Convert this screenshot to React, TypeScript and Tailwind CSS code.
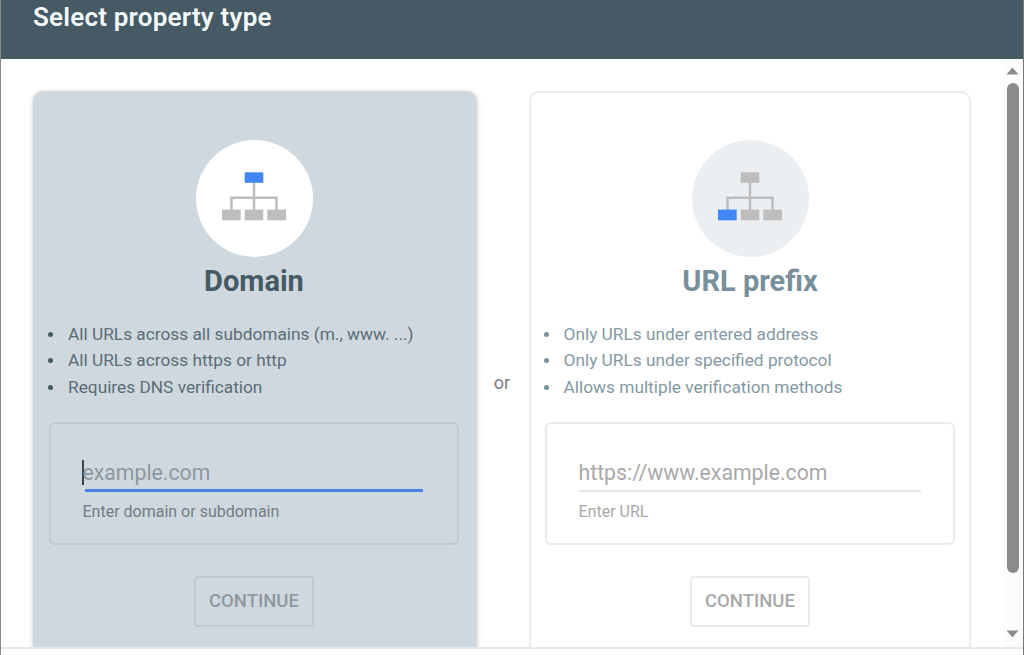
type CardProps = {
  title: string;
  points: string[];
  placeholder: string;
  hint: string;
  active?: boolean;
};

function SiteTree({ highlight }: { highlight: "root" | "leaf" }) {
  const blue = "#4285f4";
  const grey = "#bdbdbd";
  return (
    <svg width="64" height="49" viewBox="0 0 64 49" aria-hidden="true">
      <path d="M32 10v28M9.5 38V25.7h45V38" fill="none" stroke={grey} strokeWidth="2.5" />
      <rect x="22.7" y="0.3" width="18.6" height="10.5" fill={highlight === "root" ? blue : grey} />
      <rect x="0" y="37.6" width="18.7" height="10.7" fill={highlight === "leaf" ? blue : grey} />
      <rect x="22.7" y="37.6" width="18.6" height="10.7" fill={grey} />
      <rect x="45.3" y="37.6" width="18.7" height="10.7" fill={grey} />
    </svg>
  );
}

function PropertyCard({ title, points, placeholder, hint, active = false }: CardProps) {
  return (
    <section
      className={`flex h-[600px] shrink-0 flex-col items-center rounded-[10px] ${
        active
          ? "w-[444px] bg-[#cfd8de] pt-[49px] pr-[2px] text-[#455a64] shadow-[0_1px_5px_rgba(0,0,0,0.2)]"
          : "w-[442px] border-2 border-[#ececec] bg-white pt-[47px] text-[#78909c]"
      }`}
    >
      <div className={`flex size-[117px] items-center justify-center rounded-full pb-[5px] ${active ? "bg-white" : "bg-[#eceff1]"}`}>
        <SiteTree highlight={active ? "root" : "leaf"} />
      </div>
      <h2 className="mt-1 h-10 text-[29px] leading-10 font-bold">{title}</h2>
      <ul className={`mt-[20px] w-full text-[17.3px] leading-[26.4px] ${active ? "pl-[13px] text-[#5b6d76]" : "pl-[10.5px] text-[#8499a4]"}`}>
        {points.map((point) => (
          <li key={point} className="flex items-center">
            <span className={`mr-[15px] ml-[2px] size-[5px] rounded-full ${active ? "bg-[#455a64]" : "bg-[#78909c]"}`} />
            <span className="whitespace-nowrap">{point}</span>
          </li>
        ))}
      </ul>
      <div className={`mt-[21.8px] h-[123px] w-[410px] rounded-md border-2 pt-[32px] pr-8 pl-[31.5px] ${active ? "border-[#c0c9cf]" : "border-[#ebebeb]"}`}>
        <div className={`flex h-[34px] items-center pb-px text-[21.25px] ${active ? "text-[#8e979d]" : "text-[#a9a9a9]"}`}>
          {active && <span className="-mr-px -ml-px h-[25px] w-[2px] bg-[#37444b]" />}
          <span>{placeholder}</span>
        </div>
        <div className={active ? "-mt-px mr-[2px] ml-[2px] h-[3px] bg-[#4a80e2]" : "mb-px h-[2px] bg-[#e6e6e6]"} />
        <p className={`mt-[8px] text-[16px] leading-6 ${active ? "text-[#737c82]" : "text-[#a9a9a9]"}`}>{hint}</p>
      </div>
      <button className={`mt-[31px] h-[51px] w-[120px] rounded border-2 text-[18.5px] font-medium ${active ? "border-[#c0c9cf] text-[#8f989e]" : "border-[#ebebeb] text-[#a9a9a9]"}`}>
        CONTINUE
      </button>
    </section>
  );
}

function Scrollbar() {
  return (
    <div className="flex h-full w-[20px] flex-col items-center bg-[#fcfcfc] pt-[8px] pr-px pb-[9px]">
      <svg width="13" height="8" viewBox="0 0 13 8"><path d="M6.5 0.5 12.5 7.5H.5z" fill="#8b8b8b" /></svg>
      <div className="mt-[8px] h-[490px] w-[12px] rounded-full bg-[#8b8b8b]" />
      <svg width="13" height="8" viewBox="0 0 13 8" className="mt-auto"><path d="M6.5 7.5 12.5.5H.5z" fill="#8b8b8b" /></svg>
    </div>
  );
}

export default function App() {
  return (
    <div className="flex h-[655px] w-[1024px] flex-col overflow-hidden border-r border-l border-r-[#777777] border-l-[#8a8a8a] bg-white font-['Roboto',sans-serif]">
      <header className="h-[59px] shrink-0 bg-[#455a64] pl-8">
        <h1 className="h-[34px] text-[26px] leading-[34px] font-semibold tracking-[0.2px] text-[#f3f8fa]">Select property type</h1>
      </header>
      <main className="flex h-[590px] shrink-0 justify-between overflow-hidden border-b-2 border-[#e8e8e8]">
        <div className="flex pt-8 pl-8">
          <PropertyCard
            active
            title="Domain"
            points={["All URLs across all subdomains (m., www. ...)", "All URLs across https or http", "Requires DNS verification"]}
            placeholder="example.com"
            hint="Enter domain or subdomain"
          />
          <div className="w-[52px] shrink-0 pt-[280px] pr-[2px] text-center text-[18px] leading-6 text-[#7d7d7d]">or</div>
          <PropertyCard
            title="URL prefix"
            points={["Only URLs under entered address", "Only URLs under specified protocol", "Allows multiple verification methods"]}
            placeholder="https://www.example.com"
            hint="Enter URL"
          />
        </div>
        <Scrollbar />
      </main>
    </div>
  );
}
